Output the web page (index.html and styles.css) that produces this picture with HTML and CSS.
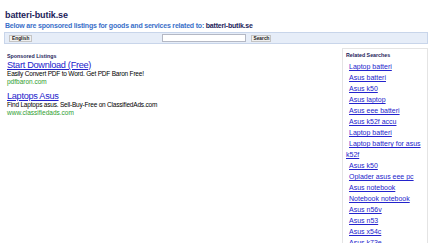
FILE: index.html
```html
<!DOCTYPE html>
<html lang="en">
<head>
    <meta charset="UTF-8">
    <title>batteri-butik.se</title>
    <link rel="stylesheet" href="styles.css">
</head>
<body>
    <div id="header">
        <h1>batteri-butik.se</h1>
        <p class="intro">Below are sponsored listings for goods and services related to: <b>batteri-butik.se</b></p>
    </div>
    <form class="bar" action="#">
        <button type="button" class="lang">English</button>
        <div class="search">
            <input type="text" class="query">
            <button type="submit" class="go">Search</button>
        </div>
    </form>
    <div id="content">
        <div class="ads">
            <h4 class="heading">Sponsored Listings</h4>
            <div class="ad">
                <a href="#" class="title">Start Download (Free)</a>
                <p class="desc">Easily Convert PDF to Word. Get PDF Baron Free!</p>
                <p class="url">pdfbaron.com</p>
            </div>
            <div class="ad">
                <a href="#" class="title">Laptops Asus</a>
                <p class="desc">Find Laptops asus. Sell-Buy-Free on ClassifiedAds.com</p>
                <p class="url">www.classifiedads.com</p>
            </div>
        </div>
        <div class="related">
            <h4 class="heading">Related Searches</h4>
            <ul>
                <li><a href="#">Laptop batteri</a></li>
                <li><a href="#">Asus batteri</a></li>
                <li><a href="#">Asus k50</a></li>
                <li><a href="#">Asus laptop</a></li>
                <li><a href="#">Asus eee batteri</a></li>
                <li><a href="#">Asus k52f accu</a></li>
                <li><a href="#">Laptop batteri</a></li>
                <li><a href="#">Laptop battery for asus k52f</a></li>
                <li><a href="#">Asus k50</a></li>
                <li><a href="#">Oplader asus eee pc</a></li>
                <li><a href="#">Asus notebook</a></li>
                <li><a href="#">Notebook notebook</a></li>
                <li><a href="#">Asus n56v</a></li>
                <li><a href="#">Asus n53</a></li>
                <li><a href="#">Asus x54c</a></li>
                <li><a href="#">Asus k73e</a></li>
            </ul>
        </div>
    </div>
</body>
</html>
```

FILE: styles.css
```css
* {
    box-sizing: border-box;
    margin: 0;
    padding: 0;
}

body {
    font-family: "Liberation Sans Narrow", "Liberation Sans", Arial, sans-serif;
    background-color: white;
    color: black;
    padding: 0 4px;
}

#header {
    padding: 9px 1px 0 1px;
}

h1 {
    font-size: 9px;
    line-height: 12px;
    letter-spacing: -0.1px;
    color: #1c1c5a;
}

.intro {
    font-size: 7px;
    line-height: 10px;
    letter-spacing: -0.2px;
    font-weight: bold;
    color: #3a6fc9;
}

.intro b {
    color: #1c1c5a;
}

.bar {
    display: grid;
    grid-template-columns: 1fr auto 1fr;
    align-items: center;
    height: 12px;
    margin-top: 1px;
    padding: 0 4px;
    background-color: #e6edf8;
    border: 1px solid #c8d5ea;
}

.bar button {
    font-family: "Liberation Sans", Arial, sans-serif;
    font-size: 4.8px;
    font-weight: bold;
    height: 7px;
    line-height: 5px;
    padding: 0 2px;
    background-color: #f0f0f0;
    border: 1px solid #c4c4c4;
    color: #222;
}

.lang {
    justify-self: start;
    width: 23px;
}

.search {
    display: flex;
    align-items: center;
    gap: 5px;
}

.go {
    width: 20px;
}

.query {
    width: 84px;
    height: 8px;
    border: 1px solid #b4b8c4;
    background-color: white;
}

#content {
    display: flex;
    justify-content: space-between;
    padding-top: 4px;
}

.heading {
    font-family: "Liberation Sans", Arial, sans-serif;
    font-size: 5.3px;
    line-height: 8px;
    font-weight: bold;
    color: #1c1c5a;
}

.ads {
    padding: 4px 3px;
}

.ad {
    margin-bottom: 6px;
}

.ad .title {
    display: block;
    font-size: 9.2px;
    line-height: 10px;
    letter-spacing: -0.3px;
    color: #2323cc;
}

.ad p {
    font-size: 6.5px;
    line-height: 7.5px;
}

.desc {
    letter-spacing: -0.2px;
}

.url {
    color: #2e9e2e;
}

.related {
    width: 86px;
    border: 1px solid #e4e4e4;
    border-bottom: 0;
    padding: 2px 3px;
}

.related ul {
    list-style: none;
    padding-top: 2px;
}

.related li {
    font-size: 7px;
    line-height: 11px;
}

.related a {
    color: #2323cc;
    margin-left: 3px;
}
```
